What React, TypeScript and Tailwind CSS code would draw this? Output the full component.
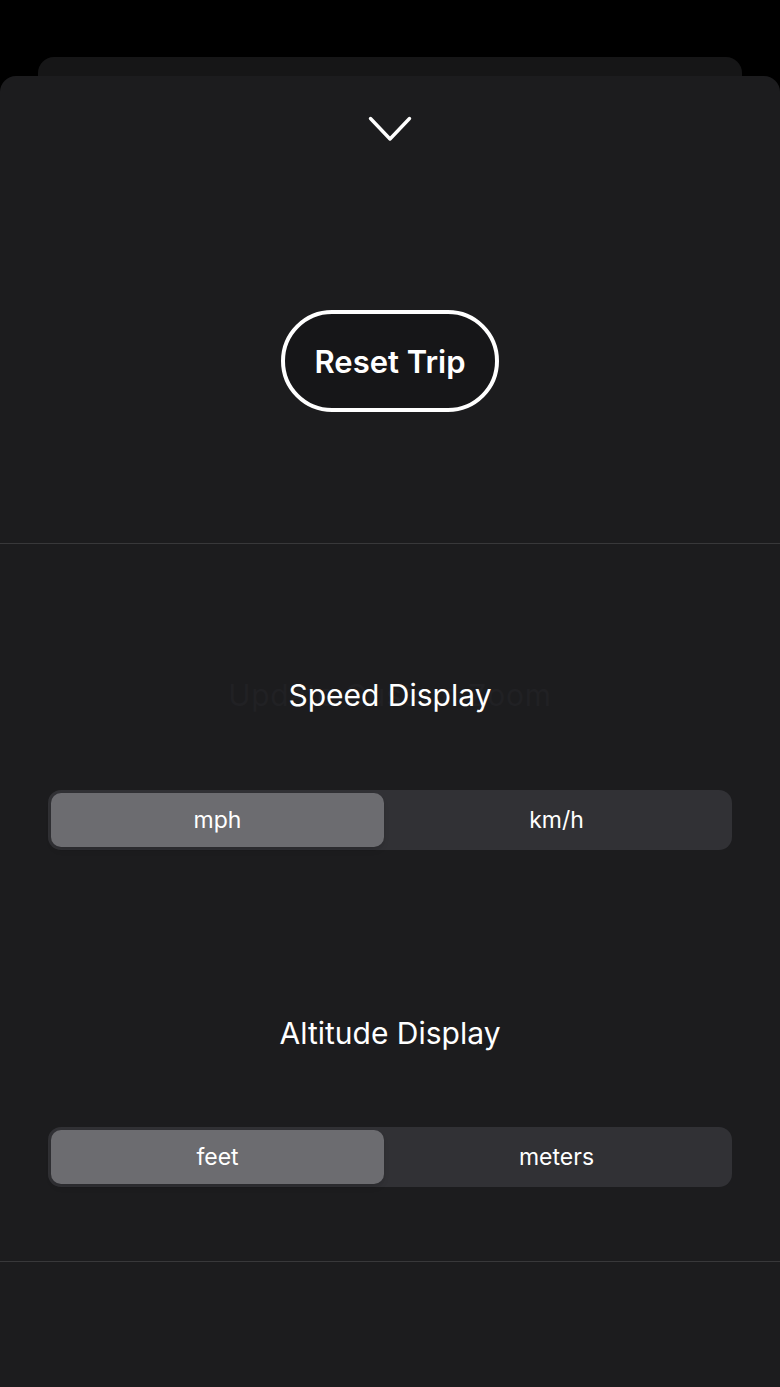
import { useState } from 'react';

function Segmented({ options, value, onChange }: { options: string[]; value: string; onChange: (v: string) => void }) {
  return (
    <div className="mx-[48px] h-[60px] rounded-[13px] bg-[#313135] p-[3px] flex">
      {options.map((o, i) => (
        <button
          key={o}
          onClick={() => onChange(o)}
          className={`${i === 0 ? 'w-[333px]' : 'flex-1'} rounded-[10px] text-[23px] text-white ${value === o ? 'bg-[#6c6c70] shadow-md' : ''}`}
        >
          {o}
        </button>
      ))}
    </div>
  );
}

export default function App() {
  const [speed, setSpeed] = useState('mph');
  const [alt, setAlt] = useState('feet');

  return (
    <div className="w-[780px] h-[1387px] bg-black overflow-hidden pt-[57px]" style={{ fontFamily: 'Inter, "Noto Sans", sans-serif' }}>
      {/* card stacked behind */}
      <div className="mx-[38px] h-[19px] rounded-t-[16px] bg-[#161617]" />
      <div className="h-[1311px] rounded-t-[16px] bg-[#1c1c1e] flex flex-col">
        <div className="flex justify-center pt-[40px]">
          <svg width="44" height="26" viewBox="0 0 44 26" fill="none">
            <path d="M2.5 2.5 L22 23 L41.5 2.5" stroke="white" strokeWidth="3.4" strokeLinecap="round" strokeLinejoin="round" />
          </svg>
        </div>

        <div className="flex justify-center pt-[168px]">
          <button className="w-[218px] h-[102px] rounded-full border-[4px] border-white bg-[#161618] text-white text-[31px] font-semibold pt-[3px]">
            Reset Trip
          </button>
        </div>

        <div className="mt-[131px] h-px bg-[#38383a]" />

        <div className="relative mt-[129px] h-[44px] flex justify-center items-center">
          <span className="absolute text-[30px] text-[#212124] tracking-wide">Update Custom Zoom</span>
          <span className="relative text-[30px] text-white">Speed Display</span>
        </div>

        <div className="mt-[73px]">
          <Segmented options={['mph', 'km/h']} value={speed} onChange={setSpeed} />
        </div>

        <div className="mt-[161px] h-[44px] flex justify-center items-center">
          <span className="text-[30px] text-white">Altitude Display</span>
        </div>

        <div className="mt-[72px]">
          <Segmented options={['feet', 'meters']} value={alt} onChange={setAlt} />
        </div>

        <div className="mt-[74px] h-px bg-[#38383a]" />
      </div>
    </div>
  );
}
